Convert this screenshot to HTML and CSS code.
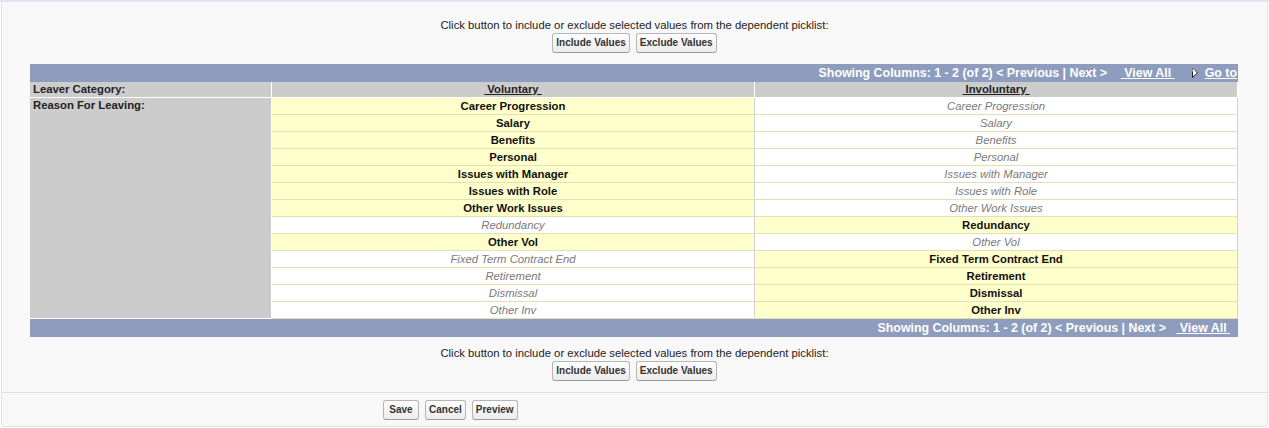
FILE: index.html
```html
<!DOCTYPE html>
<html>
<head>
<meta charset="utf-8">
<title>Field Dependency Matrix</title>
<link rel="stylesheet" href="styles.css">
</head>
<body>
<div class="band"></div>
<div class="page">
  <div class="instr instr-top">
    <div class="instr-text">Click button to include or exclude selected values from the dependent picklist:</div>
    <div class="btn-row"><button class="btn">Include Values</button><button class="btn">Exclude Values</button></div>
  </div>

  <table class="matrix">
    <colgroup><col class="c-label"><col class="c-val"><col class="c-val"></colgroup>
    <thead>
      <tr class="bar">
        <td colspan="3"><div class="pager">Showing Columns: 1 - 2 (of 2) &lt; Previous | Next &gt;&nbsp;&nbsp;&nbsp;&nbsp;<a class="plink">&nbsp;View All&nbsp;</a>&nbsp;&nbsp;&nbsp;&nbsp;&nbsp;<svg class="tri" width="6" height="10" viewBox="0 0 6 10"><polygon points="0.5,0.5 5.5,5 0.5,9.5" fill="#ffffff" stroke="#222" stroke-width="1"/><polygon points="0.5,0.5 4,3.7 0.5,3.7" fill="#ffffff"/></svg>&nbsp;&nbsp;<a class="plink">Go to</a></div></td>
      </tr>
      <tr class="heads">
        <th class="lbl">Leaver Category:</th>
        <th class="colhead"><a class="clink">&nbsp;Voluntary&nbsp;</a></th>
        <th class="colhead"><a class="clink">&nbsp;Involuntary&nbsp;</a></th>
      </tr>
    </thead>
    <tbody>
      <tr><th class="lbl lbl-tall" rowspan="13">Reason For Leaving:</th><td class="v sel">Career Progression</td><td class="v off">Career Progression</td></tr>
      <tr><td class="v sel">Salary</td><td class="v off">Salary</td></tr>
      <tr><td class="v sel">Benefits</td><td class="v off">Benefits</td></tr>
      <tr><td class="v sel">Personal</td><td class="v off">Personal</td></tr>
      <tr><td class="v sel">Issues with Manager</td><td class="v off">Issues with Manager</td></tr>
      <tr><td class="v sel">Issues with Role</td><td class="v off">Issues with Role</td></tr>
      <tr><td class="v sel">Other Work Issues</td><td class="v off">Other Work Issues</td></tr>
      <tr><td class="v off">Redundancy</td><td class="v sel">Redundancy</td></tr>
      <tr><td class="v sel">Other Vol</td><td class="v off">Other Vol</td></tr>
      <tr><td class="v off">Fixed Term Contract End</td><td class="v sel">Fixed Term Contract End</td></tr>
      <tr><td class="v off">Retirement</td><td class="v sel">Retirement</td></tr>
      <tr><td class="v off">Dismissal</td><td class="v sel">Dismissal</td></tr>
      <tr><td class="v off">Other Inv</td><td class="v sel">Other Inv</td></tr>
    </tbody>
    <tfoot>
      <tr class="bar">
        <td colspan="3"><div class="pager pager-bottom">Showing Columns: 1 - 2 (of 2) &lt; Previous | Next &gt;&nbsp;&nbsp;&nbsp;<a class="plink">&nbsp;View All&nbsp;</a></div></td>
      </tr>
    </tfoot>
  </table>

  <div class="instr instr-bottom">
    <div class="instr-text">Click button to include or exclude selected values from the dependent picklist:</div>
    <div class="btn-row"><button class="btn">Include Values</button><button class="btn">Exclude Values</button></div>
  </div>

  <div class="footer">
    <div class="footer-btns"><button class="btn btn-save">Save</button><button class="btn">Cancel</button><button class="btn">Preview</button></div>
  </div>
</div>
</body>
</html>
```

FILE: styles.css
```css
html, body {
  margin: 0;
  padding: 0;
  background: #ffffff;
  font-family: "Liberation Sans", Arial, sans-serif;
  color: #222;
}

.band {
  height: 2px;
  background: #e3e6f0;
}

.page {
  margin: 0 1px 0 1px;
  border: 1px solid #e2e2e2;
  border-top: none;
  border-radius: 0 0 4px 4px;
  background: #f8f8f8;
  height: 425px;
  box-sizing: border-box;
  display: flex;
  flex-direction: column;
}

.instr {
  display: flex;
  flex-direction: column;
  align-items: center;
}

.instr-top {
  padding-top: 16px;
}

.instr-bottom {
  padding-top: 9px;
}

.instr-text {
  font-size: 11.3px;
  line-height: 14px;
  color: #222;
}

.btn-row {
  display: flex;
  gap: 6px;
  margin-top: 1px;
}

.btn {
  font-family: "Liberation Sans", Arial, sans-serif;
  font-size: 10px;
  font-weight: bold;
  color: #333;
  height: 20px;
  padding: 0 3px;
  margin: 0;
  border: 1px solid #b5b5b5;
  border-bottom-color: #9a9a9a;
  border-radius: 3px;
  background: linear-gradient(#fdfdfd, #ececec);
  box-sizing: border-box;
  line-height: 18px;
}

.btn-save {
  min-width: 36px;
}

.matrix {
  margin: 11px 29px 0 28px;
  width: 1208px;
  table-layout: fixed;
  border-collapse: separate;
  border-spacing: 0;
  font-size: 11.3px;
}

.c-label { width: 242px; }
.c-val { width: 483px; }

.matrix td, .matrix th {
  padding: 0;
}

.bar td {
  background: #8e9dbe;
  height: 18px;
  padding: 0;
}

.pager {
  text-align: right;
  color: #ffffff;
  font-weight: bold;
  font-size: 12.4px;
  line-height: 18px;
  padding-right: 1px;
  white-space: nowrap;
}

.pager-bottom {
  padding-right: 8px;
}

.plink {
  color: #ffffff;
  text-decoration: underline;
}

.tri {
  vertical-align: -1px;
}

.heads th {
  height: 15px;
  background: #cccccc;
  border-bottom: 1px solid #ffffff;
  border-right: 1px solid #ffffff;
  font-weight: bold;
  line-height: 15px;
}

.lbl {
  text-align: left;
  padding: 0 0 0 3px !important;
  background: #cccccc;
  border-right: 1px solid #ffffff;
  border-bottom: 1px solid #ffffff;
  font-weight: bold;
  color: #222;
  white-space: nowrap;
}

.lbl-tall {
  vertical-align: top;
  line-height: 15px;
}

.colhead {
  text-align: center;
}

.clink {
  color: #222;
  text-decoration: underline;
}

.v {
  height: 16px;
  line-height: 16px;
  text-align: center;
  border-bottom: 1px solid #e3dfb9;
  border-right: 1px solid #d2d2d2;
  white-space: nowrap;
}

.sel {
  background: #ffffcc;
  font-weight: bold;
  color: #111;
}

.off {
  background: #ffffff;
  font-style: italic;
  color: #7a7a7a;
}

.footer {
  margin-top: 11px;
  border-top: 1px solid #dedede;
  padding: 7px 0 6px 0;
}

.footer-btns {
  display: flex;
  gap: 6px;
  padding-left: 381px;
}
```
